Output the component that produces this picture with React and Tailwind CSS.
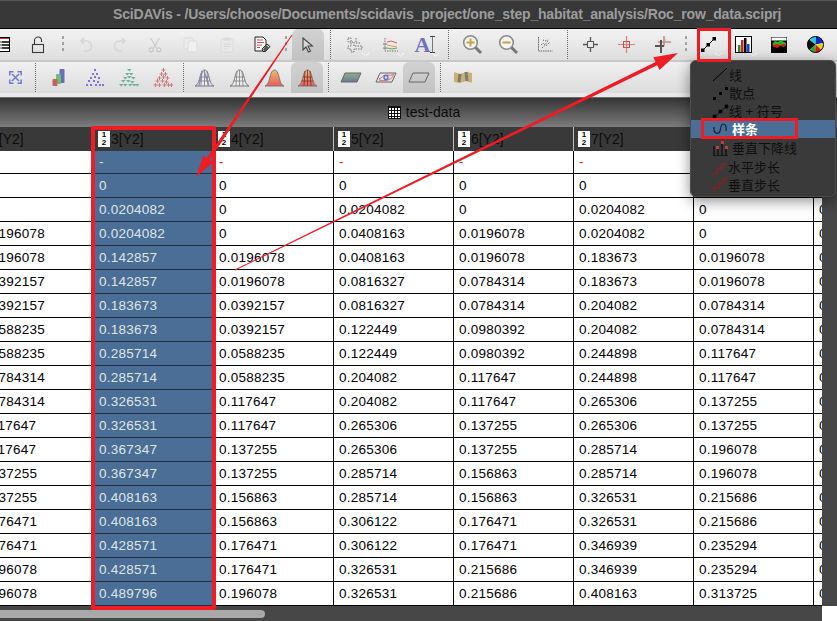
import React from 'react';

// columnas 2..9 de la tabla (cada una 120px, la primera y la ultima recortadas)
const ROWS = [
  ['', '-', '-', '-', '-', '-', '-', '-'],
  ['', '0', '0', '0', '0', '0', '0', '0'],
  ['', '0.0204082', '0', '0.0204082', '0', '0.0204082', '0', '0'],
  ['0.0196078', '0.0204082', '0', '0.0408163', '0.0196078', '0.0204082', '0', '0'],
  ['0.0196078', '0.142857', '0.0196078', '0.0408163', '0.0196078', '0.183673', '0.0196078', '0'],
  ['0.0392157', '0.142857', '0.0196078', '0.0816327', '0.0784314', '0.183673', '0.0196078', '0'],
  ['0.0392157', '0.183673', '0.0392157', '0.0816327', '0.0784314', '0.204082', '0.0784314', '0'],
  ['0.0588235', '0.183673', '0.0392157', '0.122449', '0.0980392', '0.204082', '0.0784314', '0'],
  ['0.0588235', '0.285714', '0.0588235', '0.122449', '0.0980392', '0.244898', '0.117647', '0'],
  ['0.0784314', '0.285714', '0.0588235', '0.204082', '0.117647', '0.244898', '0.117647', '0'],
  ['0.0784314', '0.326531', '0.117647', '0.204082', '0.117647', '0.265306', '0.137255', '0'],
  ['0.117647', '0.326531', '0.117647', '0.265306', '0.137255', '0.265306', '0.137255', '0'],
  ['0.117647', '0.367347', '0.137255', '0.265306', '0.137255', '0.285714', '0.196078', '0'],
  ['0.137255', '0.367347', '0.137255', '0.285714', '0.156863', '0.285714', '0.196078', '0'],
  ['0.137255', '0.408163', '0.156863', '0.285714', '0.156863', '0.326531', '0.215686', '0'],
  ['0.176471', '0.408163', '0.156863', '0.306122', '0.176471', '0.326531', '0.215686', '0'],
  ['0.176471', '0.428571', '0.176471', '0.306122', '0.176471', '0.346939', '0.235294', '0'],
  ['0.196078', '0.428571', '0.176471', '0.326531', '0.215686', '0.346939', '0.235294', '0'],
  ['0.196078', '0.489796', '0.196078', '0.326531', '0.215686', '0.408163', '0.313725', '0'],
];

const HEADERS = ['2[Y2]', '3[Y2]', '4[Y2]', '5[Y2]', '6[Y2]', '7[Y2]', '8[Y2]', '9[Y2]'];

/* ---------- toolbar helpers ---------- */

const Chevron = () => (
  <svg width="9" height="5" viewBox="0 0 9 5" className="absolute left-1/2 ml-[6px] bottom-[3px]">
    <path d="M1 1l3.5 3L8 1" fill="none" stroke="#fbfbfb" strokeWidth="1" />
  </svg>
);

const Btn = ({ w = 'w-[35px]', active, chevron, children }) => (
  <div
    className={`${w} relative h-full shrink-0 flex items-center justify-center ${
      active ? 'rounded-t-md bg-gradient-to-b from-[#d2d2d2] to-[#c2c2c2]' : ''
    }`}
  >
    {children}
    {chevron && <Chevron />}
  </div>
);

const Grip = ({ w }) => (
  <div className={`${w} h-full shrink-0 flex flex-col items-center justify-center gap-[3px] pb-[2px]`}>
    <div className="w-[2px] h-[3px] bg-[#a2a2a2]" />
    <div className="w-[2px] h-[3px] bg-[#a2a2a2]" />
    <div className="w-[2px] h-[3px] bg-[#a2a2a2]" />
  </div>
);

const Dotted = ({ w }) => (
  <div className={`${w} h-full shrink-0 flex justify-center py-[1px]`}>
    <div className="h-full border-l border-dotted border-[#6a6a6a]" />
  </div>
);

const Icon = ({ w = 20, h = 20, children }) => (
  <svg width={w} height={h} viewBox={`0 0 ${w} ${h}`} className="block shrink-0">
    {children}
  </svg>
);

/* ---------- iconos fila 1 ---------- */

const TableIcon = () => (
  <Icon w={14} h={15}>
    <rect x="0.5" y="0.5" width="13" height="14" fill="#fff" stroke="#000" />
    <rect x="1" y="1" width="12" height="1" fill="#c33" />
    <path d="M1 5h12M1 8h12M1 11h12" stroke="#000" strokeWidth="1.4" />
    <path d="M5 4v10" stroke="#fff" strokeWidth="1" />
  </Icon>
);

const LockIcon = () => (
  <Icon w={14} h={18}>
    <rect x="1.5" y="8.5" width="11" height="8" fill="none" stroke="#3a3a3a" strokeWidth="1.1" />
    <path d="M3.5 8V4.5a3.5 3.5 0 0 1 7 0V6" fill="none" stroke="#3a3a3a" strokeWidth="1.1" />
  </Icon>
);

const UndoIcon = ({ flip }) => (
  <Icon w={14} h={16}>
    <g transform={flip ? 'translate(14,0) scale(-1,1)' : ''} fill="none" stroke="#d6d6d6" strokeWidth="1.5">
      <path d="M2 4h5.5a4.8 4.8 0 0 1 0 10H5" />
      <path d="M5 1L2 4l3 3" />
    </g>
  </Icon>
);

const ScissorsIcon = () => (
  <Icon w={14} h={16}>
    <g fill="none" stroke="#c9c9c9" strokeWidth="1.2">
      <path d="M2.5 1l6 10M11.5 1l-6 10" />
      <circle cx="3.2" cy="12.8" r="2" />
      <circle cx="10.8" cy="12.8" r="2" />
    </g>
  </Icon>
);

const CopyIcon = () => (
  <Icon w={15} h={16}>
    <rect x="1" y="1" width="9" height="11" rx="1.5" fill="#ececec" stroke="#dadada" />
    <rect x="5" y="4" width="9" height="11" rx="1.5" fill="#f0f0f0" stroke="#dadada" />
  </Icon>
);

const PasteIcon = () => (
  <Icon w={14} h={16}>
    <rect x="1" y="2" width="12" height="13" rx="1.5" fill="#e9e9e9" stroke="#dadada" />
    <rect x="4" y="0.5" width="6" height="3" fill="#dcdcdc" />
    <path d="M3.5 7h7M3.5 9.5h7M3.5 12h4" stroke="#d6d6d6" />
  </Icon>
);

const NoteIcon = () => (
  <Icon w={17} h={17}>
    <path d="M1 1h8l3 3v11H1z" fill="#fff" stroke="#222" />
    <path d="M3 4h6M3 6.5h7M3 9h5M3 11.5h3" stroke="#d8484c" />
    <path d="M8 13l5-5 3 2.5-4.5 5H9z" fill="#d8d8d8" stroke="#222" />
    <path d="M12 9l3 2.5-3.5 4-2.5-1.5z" fill="#555" />
  </Icon>
);

const PointerIcon = () => (
  <Icon w={14} h={16}>
    <path d="M2 1v12l3-3 2.5 5 2-1-2.5-5h4.5z" fill="#d6d6d6" stroke="#454545" strokeWidth="1.1" />
  </Icon>
);

const AxesIcon = () => (
  <Icon w={16} h={16}>
    <path
      d="M1 1h3v4h3v4h8v3H7v3H4v-3H1V9h3V5H1z"
      fill="none"
      stroke="#777"
      strokeWidth="1"
      strokeDasharray="1.5 1"
    />
    <path d="M9 1v5h5" fill="none" stroke="#777" strokeDasharray="1.5 1" />
  </Icon>
);

const LegendIcon = () => (
  <Icon w={17} h={16}>
    <path d="M3 1v13h13" fill="none" stroke="#777" strokeDasharray="1.5 1" />
    <path d="M5 5l4-1 6 2" fill="none" stroke="#e25a5a" />
    <path d="M5 8l5 1 5 1" fill="none" stroke="#e0a040" />
    <path d="M5 11l5 1 5-1" fill="none" stroke="#60a860" />
    <path d="M1 7h4M1 11h4" stroke="#777" />
  </Icon>
);

const TextToolIcon = () => (
  <div className="flex items-center">
    <span className="font-['Liberation_Serif',serif] font-bold text-[22px] leading-none text-[#6d72bb]">A</span>
    <div className="w-[5px] h-[17px] border-y border-[#444] flex justify-center">
      <div className="w-px h-full bg-[#777]" />
    </div>
  </div>
);

const ZoomIcon = ({ plus }) => (
  <Icon w={21} h={21}>
    <path d="M13 13l6 6" stroke="#777" strokeWidth="3" />
    <circle cx="8.5" cy="8.5" r="6.8" fill="#f4f4f0" stroke="#8a8a8a" strokeWidth="1.6" />
    <path d="M4.5 8.5h8" stroke="#c9a050" strokeWidth="2" />
    {plus && <path d="M8.5 4.5v8" stroke="#c9a050" strokeWidth="2" />}
  </Icon>
);

const DatasetIcon = () => (
  <Icon w={17} h={17}>
    <path d="M2.5 1v14h14" fill="none" stroke="#666" strokeDasharray="1.5 0.8" />
    <path d="M5 9l2-2 2 2 2-3 2-2M6 12l2-2 3-1 3-3M7 4l2 1 3-1" fill="none" stroke="#666" strokeDasharray="1.2 1.2" />
  </Icon>
);

const Cross = ({ color = '#555', box = '#555' }) => (
  <Icon w={17} h={17}>
    <path d="M8.5 1v5M8.5 11v5M1 8.5h5M11 8.5h5" stroke={color} strokeWidth="1.3" />
    <rect x="5.5" y="5.5" width="6" height="6" fill="none" stroke={box} />
  </Icon>
);

const RedCross = () => (
  <Icon w={17} h={17}>
    <path d="M8.5 0v17M0 8.5h17" stroke="#e87a7a" strokeWidth="1.2" />
    <rect x="5.5" y="5.5" width="6" height="6" fill="none" stroke="#d05050" />
  </Icon>
);

const MixedCross = () => (
  <Icon w={17} h={17}>
    <path d="M10 0v10M4 6h13" stroke="#e08080" strokeWidth="1.6" />
    <path d="M7 4v13M1 10h9" stroke="#555" strokeWidth="2" />
    <path d="M11 3v3h3" stroke="#70c8c8" fill="none" />
  </Icon>
);

const LinePlotIcon = ({ stroke = '#000' }) => (
  <Icon w={15} h={15}>
    <path d="M1.5 13.5l12-12" stroke={stroke} strokeWidth="1" />
    <rect x="0" y="11.5" width="3.5" height="3.5" fill={stroke} />
    <rect x="5.5" y="6" width="3.5" height="3.5" fill={stroke} />
    <rect x="11.5" y="0" width="3.5" height="3.5" fill={stroke} />
  </Icon>
);

const BarsIcon = () => (
  <Icon w={17} h={17}>
    <rect x="0.5" y="0.5" width="16" height="16" fill="#fff" stroke="#000" />
    <rect x="3" y="9" width="2.5" height="7" fill="#2a8a2a" />
    <rect x="6" y="4" width="2.5" height="12" fill="#d42020" />
    <rect x="9" y="2" width="2.5" height="14" fill="#000" />
    <rect x="12" y="8" width="2.5" height="8" fill="#2040d0" />
  </Icon>
);

const AreaIcon = () => (
  <Icon w={16} h={16}>
    <rect width="16" height="16" fill="#000" />
    <rect x="0.5" y="0.5" width="15" height="3" fill="#fff" />
    <path d="M1 9l3-4 3 2 3-3 3 2 2 1v2l-3 1-3-1-3 2-3-1z" fill="#d81818" />
    <path d="M1 7l3-3 3 1 3-2 3 2 2 1v2l-3-1-3 1-3-1-3 1z" fill="#20b820" />
  </Icon>
);

const PieIcon = () => (
  <Icon w={17} h={17}>
    <circle cx="8.5" cy="8.5" r="8" fill="#fff" />
    <path d="M8.5 8.5L2 3.5A8 8 0 0 1 9 0.5z" fill="#20d0e0" />
    <path d="M8.5 8.5L9 0.5A8 8 0 0 1 16.5 7z" fill="#1028c8" />
    <path d="M8.5 8.5L16.5 7A8 8 0 0 1 14.5 14z" fill="#e8d820" />
    <path d="M8.5 8.5L14.5 14A8 8 0 0 1 8 16.5z" fill="#d81818" />
    <path d="M8.5 8.5L8 16.5A8 8 0 0 1 2.5 14z" fill="#20b030" />
    <path d="M8.5 8.5L2.5 14A8 8 0 0 1 2 3.5z" fill="#111" />
    <circle cx="8.5" cy="8.5" r="8" fill="none" stroke="#000" />
  </Icon>
);

/* ---------- iconos fila 2 ---------- */

const ExpandIcon = () => (
  <Icon w={13} h={13}>
    <g fill="none" stroke="#6f78d8" strokeWidth="1.5">
      <path d="M3 3l7 7M10 3l-7 7" />
      <path d="M0.8 4.5V0.8h3.7M8.5 0.8h3.7v3.7M12.2 8.5v3.7H8.5M4.5 12.2H0.8V8.5" />
    </g>
  </Icon>
);

const Bars3dIcon = () => (
  <Icon w={13} h={19}>
    <rect x="7.5" y="1" width="5" height="14" rx="1" fill="#6a6cc0" />
    <rect x="4" y="6" width="5" height="10" rx="1" fill="#6cc070" />
    <rect x="0.5" y="11" width="5" height="7" rx="1" fill="#c86060" />
  </Icon>
);

// triangulo de puntos: scatter, vectores, simbolos
const POINTS = [
  [10, 1], [8, 5], [12, 5], [6, 9], [10, 8], [14, 9], [4, 12], [9, 12], [13, 13], [2, 16], [6, 16], [11, 16], [15, 16], [18, 16],
];

const ScatterIcon = ({ kind }) => (
  <Icon w={20} h={19}>
    {POINTS.map(([x, y], i) =>
      kind === 'dot' ? (
        <rect key={i} x={x} y={y} width="2" height="2" fill="#7d72e0" />
      ) : kind === 'tri' ? (
        <path key={i} d={`M${x - 2} ${y}h4.5l-2.2 2.5z`} fill="#6fb09a" />
      ) : (
        <path key={i} d={`M${x - 1.5} ${y + 1}h4M${x + 0.5} ${y - 1}v4`} stroke="#d07a80" strokeWidth="1" />
      )
    )}
  </Icon>
);

const Cone = ({ id, fill, blue, dark }) => (
  <Icon w={21} h={18}>
    {fill && (
      <defs>
        <linearGradient id={id} x1="0" y1="0" x2="0" y2="1">
          <stop offset="0" stopColor="#eac070" />
          <stop offset="1" stopColor="#ea5a58" />
        </linearGradient>
      </defs>
    )}
    <path
      d="M1 17c3-1 4-5 5-9 1-4 2-7 4.500-7s3.500 3 4.500 7c1 4 2 8 5 9z"
      fill={fill ? `url(#${id})` : '#eeeeee'}
      stroke="#777"
      strokeWidth="1"
    />
    {blue && <path d="M8 2l-3 15M10 2l5 15" stroke="#8d8ee0" strokeWidth="1.5" fill="none" />}
    {(!fill || dark) && (
      <path
        d="M6 8h9M4.500 12h12M7 17l1-15M14 17l-1-15M10.500 1v16"
        stroke={dark ? '#803838' : '#888'}
        strokeWidth="0.9"
        fill="none"
      />
    )}
  </Icon>
);

const PlaneIcon = ({ kind }) => (
  <Icon w={22} h={11}>
    {kind === 'grad' && (
      <defs>
        <linearGradient id="planeGrad" x1="0" y1="0" x2="0" y2="1">
          <stop offset="0" stopColor="#8fae8a" />
          <stop offset="1" stopColor="#6b7a96" />
        </linearGradient>
      </defs>
    )}
    <path
      d="M5 1h16l-4 9H1z"
      fill={kind === 'grad' ? 'url(#planeGrad)' : 'none'}
      stroke="#666"
      strokeWidth="1"
    />
    {kind === 'map' && (
      <>
        <path d="M4 7c4-1 3-4 7-4s5 1 8-1M4 8c5 1 8 1 11-1s3-2 3-4" stroke="#e06a6a" fill="none" />
        <circle cx="11" cy="5.500" r="2" fill="none" stroke="#5a6ae0" strokeWidth="1.300" />
      </>
    )}
  </Icon>
);

const GeoIcon = () => (
  <Icon w={20} h={13}>
    <path d="M1 1l6 2 6-2 6 1v10l-6-2-6 2-6-1z" fill="#c9b078" />
    <path d="M7 3l-1 8M13 1l1 9" stroke="#7d7d68" strokeWidth="3" />
  </Icon>
);

/* ---------- iconos menu ---------- */

const MenuIcon = ({ children }) => (
  <svg width="18" height="18" viewBox="0 0 18 18" className="absolute left-[21px] top-0">
    {children}
  </svg>
);

const MENU_ITEMS = [
  { label: '线', h: 'h-[18px]', pl: 'pl-[38px]', icon: <path d="M1 15L15 2" stroke="#000" /> },
  {
    label: '散点',
    h: 'h-[18px]',
    pl: 'pl-[38px]',
    icon: <path d="M1 13h3v3H1zM7 8h3v3H7zM13 3h3v3h-3z" fill="#000" />,
  },
  {
    label: '线 + 符号',
    h: 'h-[18px]',
    pl: 'pl-[38px]',
    icon: <path d="M1 13h3v3H1zM7 8h3v3H7zM13 3h3v3h-3zM2 15L15 4" fill="#000" stroke="#000" strokeWidth="0.6" />,
  },
  {
    label: '样条',
    h: 'h-[18px]',
    pl: 'pl-[41px]',
    active: true,
    icon: <path d="M2 7c-1 7 5 8 6 4s1-7 3-7 4 2 3 7" fill="none" stroke="#0f1d33" strokeWidth="1.1" />,
  },
  {
    label: '垂直下降线',
    h: 'h-[20px]',
    pl: 'pl-[41px]',
    icon: (
      <g>
        <path d="M2 8v10M6 10v8M10 6v12M14 10v8M1 18h15" stroke="#000" />
        <path d="M4 8h3v3H4zM9 3h3v3H9zM13 8h3v3h-3z" fill="#c63a3a" />
      </g>
    ),
  },
  {
    label: '水平步长',
    h: 'h-[18px]',
    pl: 'pl-[37px]',
    icon: <path d="M1 16h4v-5h5V6h5" fill="none" stroke="#9c1a1a" strokeWidth="1.1" />,
  },
  {
    label: '垂直步长',
    h: 'h-[18px]',
    pl: 'pl-[37px]',
    icon: <path d="M2 17v-5h5V7h5V2h4" fill="none" stroke="#9c1a1a" strokeWidth="1.1" />,
  },
];

const HeaderIcon = () => (
  <div className="w-[12px] h-[16px] bg-white shrink-0 flex flex-col items-center text-[8px] leading-[8px] font-bold text-black">
    <span>1</span>
    <span>2</span>
  </div>
);

const App = () => {
  return (
    <div className="relative w-[837px] h-[621px] overflow-hidden bg-white font-['Liberation_Sans','Noto_Sans_CJK_SC',sans-serif]">
      {/* barra de titulo */}
      <div className="h-[29px] bg-[#383838] border-t border-[#565656] border-b border-b-black flex items-center pl-[113px] pb-[1px]">
        <span className="text-[14px] tracking-[-0.18px] font-bold text-[#9c9c9c] whitespace-nowrap">
          SciDAVis - /Users/choose/Documents/scidavis_project/one_step_habitat_analysis/Roc_row_data.sciprj
        </span>
      </div>

      {/* toolbar superior */}
      <div className="h-[33px] flex items-stretch bg-gradient-to-b from-[#f2f2f2] to-[#dedede] border-b-2 border-[#c8c8c8] overflow-hidden">
        <Btn w="w-[34px] ml-[-14px]"><TableIcon /></Btn>
        <Btn w="w-[36px]"><LockIcon /></Btn>
        <Grip w="w-[14px]" />
        <Btn w="w-[32px]"><UndoIcon /></Btn>
        <Btn><UndoIcon flip /></Btn>
        <Btn><ScissorsIcon /></Btn>
        <Btn w="w-[37px]"><CopyIcon /></Btn>
        <Btn w="w-[35px]"><PasteIcon /></Btn>
        <Btn w="w-[36px]"><NoteIcon /></Btn>
        <Grip w="w-[12px]" />
        <Btn w="w-[32px]" active><PointerIcon /></Btn>
        <Dotted w="w-[13px]" />
        <Btn chevron><AxesIcon /></Btn>
        <Btn w="w-[36px]" chevron><LegendIcon /></Btn>
        <Btn w="w-[34px]" chevron><TextToolIcon /></Btn>
        <Dotted w="w-[13px]" />
        <Btn><ZoomIcon plus /></Btn>
        <Btn w="w-[36px]"><ZoomIcon /></Btn>
        <Btn w="w-[36px]"><DatasetIcon /></Btn>
        <Dotted w="w-[10px]" />
        <Btn w="w-[36px]"><Cross /></Btn>
        <Btn w="w-[36px]"><RedCross /></Btn>
        <Btn w="w-[36px]"><MixedCross /></Btn>
        <Grip w="w-[11px]" />
        <Btn w="w-[34px]" chevron><LinePlotIcon /></Btn>
        <Btn w="w-[36px]" chevron><BarsIcon /></Btn>
        <Btn w="w-[36px]"><AreaIcon /></Btn>
        <Btn w="w-[36px]"><PieIcon /></Btn>
      </div>

      {/* toolbar 3D */}
      <div className="h-[31px] flex items-stretch bg-gradient-to-b from-[#f0f0f0] to-[#dcdcdc]">
        <Btn w="w-[30px]"><ExpandIcon /></Btn>
        <Dotted w="w-[11px]" />
        <Btn><Bars3dIcon /></Btn>
        <Btn><ScatterIcon kind="dot" /></Btn>
        <Btn><ScatterIcon kind="tri" /></Btn>
        <Btn w="w-[34px]"><ScatterIcon kind="plus" /></Btn>
        <Dotted w="w-[7px]" />
        <Btn><Cone id="c1" blue /></Btn>
        <Btn><Cone id="c2" /></Btn>
        <Btn w="w-[34px]"><Cone id="c3" fill /></Btn>
        <Btn w="w-[32px]" active><Cone id="c4" fill dark /></Btn>
        <Dotted w="w-[10px]" />
        <Btn><PlaneIcon kind="grad" /></Btn>
        <Btn><PlaneIcon kind="map" /></Btn>
        <Btn w="w-[32px]" active><PlaneIcon /></Btn>
        <Dotted w="w-[10px]" />
        <Btn><GeoIcon /></Btn>
      </div>

      {/* separador inferior */}
      <div className="h-[5px] bg-[#e9e9e9] border-b border-[#6b6b6b]" />

      {/* barra de ventana */}
      <div className="h-[29px] bg-gradient-to-b from-[#363636] to-[#7c7c7c] flex items-center justify-center pl-[11px] gap-[5px]">
        <svg width="13" height="13" viewBox="0 0 13 13" className="block">
          <rect width="13" height="13" fill="#111" />
          <path d="M1 2h11v10H1z" fill="#fff" />
          <path d="M0 4.500h13M0 7.500h13M0 10.500h13M3.500 2v11M6.500 2v11M9.500 2v11" stroke="#111" />
        </svg>
        <span className="text-[14px] text-[#0c0c0c]">test-data</span>
      </div>

      {/* tabla + scrollbars */}
      <div className="flex h-[494px]">
        <div className="w-[822px] shrink-0 flex flex-col overflow-hidden">
          <div className="h-[24px] shrink-0 flex bg-[#393939] ml-[-26px] w-[848px]">
            {HEADERS.map((h) => (
              <div
                key={h}
                className="w-[120px] shrink-0 h-full flex items-center gap-px pl-[4px] border-r border-[#bdbdbd] text-[14px] text-[#0c0c0c]"
              >
                <HeaderIcon />
                <span>{h}</span>
              </div>
            ))}
          </div>
          <div className="flex-1 flex flex-col ml-[-26px] w-[848px] text-[13.5px] text-black tracking-[0.25px]">
            {ROWS.map((row, r) => (
              <div key={r} className={`${r === 0 ? 'h-[23px]' : 'h-[24px]'} shrink-0 flex`}>
                {row.map((val, c) => (
                  <div
                    key={c}
                    className={`w-[120px] shrink-0 h-full flex items-center pl-[5px] pt-[1px] border-b border-r ${
                      c === 1
                        ? 'bg-[#4a6e96] text-[#dfe6ee] border-b-[#1e2c3e] border-r-black'
                        : r === 0
                          ? 'text-[#e02020] border-black'
                          : 'border-black'
                    }`}
                  >
                    {val}
                  </div>
                ))}
              </div>
            ))}
          </div>
          <div className="h-[15px] shrink-0 bg-[#474747] pt-[4px]">
            <div className="w-[265px] h-[8px] bg-[#a8a8a8] rounded-r-full" />
          </div>
        </div>
        <div className="w-[15px] shrink-0 flex flex-col">
          <div className="flex-1 bg-[#474747]" />
          <div className="h-[15px] bg-white" />
        </div>
      </div>

      {/* menu desplegable */}
      <div className="absolute left-[690px] top-[60px] w-[146px] h-[137px] pt-[5px] rounded-[6px] bg-[#3a3a3a] border border-[#4c4c4c] shadow-[0_4px_14px_rgba(0,0,0,0.45)] text-[13px] leading-none text-[#0e0e0e]">
        {MENU_ITEMS.map((item) => (
          <div
            key={item.label}
            className={`relative ${item.h} ${item.pl} flex items-center ${
              item.active ? 'bg-[#4a6e96] text-white font-bold' : ''
            }`}
          >
            <MenuIcon>{item.icon}</MenuIcon>
            <span>{item.label}</span>
          </div>
        ))}
      </div>

      {/* anotaciones rojas */}
      <div className="absolute left-[91px] top-[126px] w-[125px] h-[484px] border-[4px] border-[#ee1c25] rounded-[2px]" />
      <div className="absolute left-[697px] top-[28px] w-[34px] h-[34px] border-[3px] border-[#ee1c25]" />
      <div className="absolute left-[701px] top-[118px] w-[97px] h-[21px] border-[3px] border-[#ee1c25]" />
      <svg width="837" height="621" viewBox="0 0 837 621" className="absolute left-0 top-0 pointer-events-none">
        <polygon
          points="292.4,35.3 209.8,159.8 213.3,162.2 196,177 203.3,155.4 206.8,157.8 291.6,34.7"
          fill="#ee1c25"
        />
        <polygon
          points="235.2,270.4 657.2,65.2 659.5,69.900 678,53 653.3,57.300 655.600,62 234.800,269.600"
          fill="#ee1c25"
        />
      </svg>
    </div>
  );
};

export default App;
